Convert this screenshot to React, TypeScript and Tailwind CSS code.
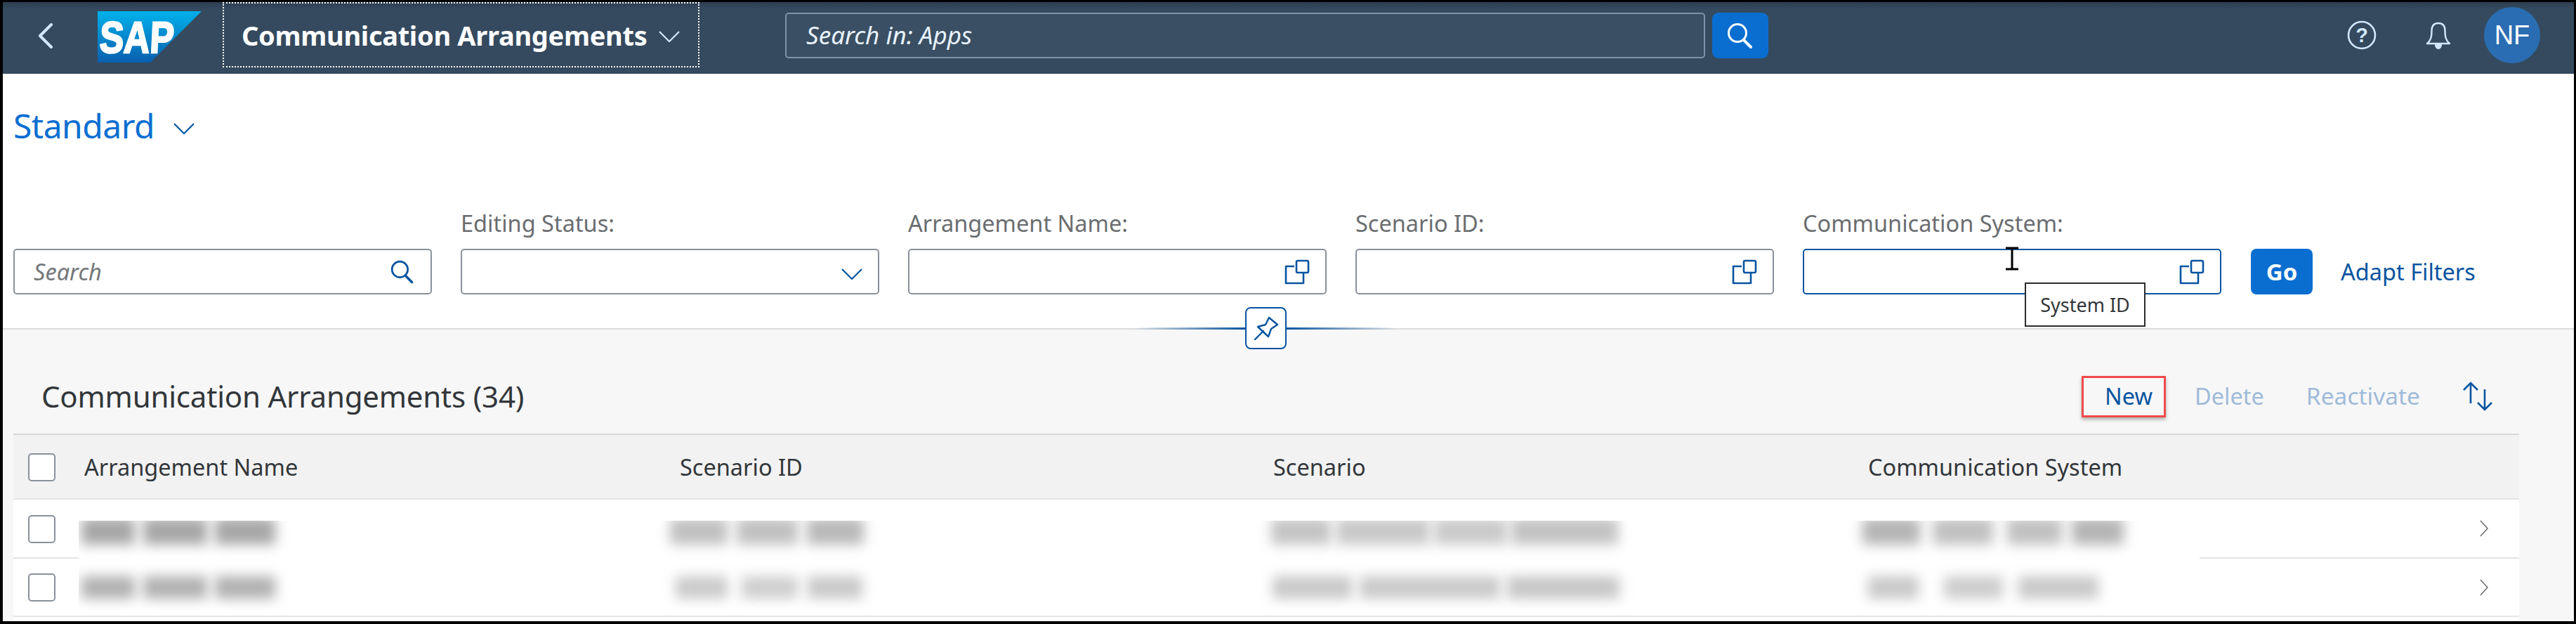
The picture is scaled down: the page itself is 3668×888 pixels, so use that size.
import React from "react";

const SearchIcon = ({ className }: { className: string }) => (
  <svg viewBox="0 0 40 40" className={className} fill="none" stroke="currentColor">
    <circle cx="16" cy="16" r="12.5" strokeWidth="3" />
    <path d="M25 26 L35 36" strokeWidth="4" strokeLinecap="round" />
  </svg>
);

const Chevron = ({ className }: { className: string }) => (
  <svg viewBox="0 0 30 16" className={className} fill="none" stroke="currentColor" strokeWidth="2.2">
    <path d="M1 1 L15 15 L29 1" />
  </svg>
);

const ValueHelp = () => (
  <svg viewBox="0 0 36 36" className="h-[36px] w-[36px] text-[#0854a0]" fill="none" stroke="currentColor" strokeWidth="2.6" strokeLinejoin="round">
    <path d="M14 10 H2 V34 H27 V20" />
    <rect x="17" y="2" width="17" height="17" rx="2" />
  </svg>
);

const Field = ({ label, focused, children }: { label: string; focused?: boolean; children: React.ReactNode }) => (
  <div className="flex w-[596px] flex-col">
    <div className="h-[49px] text-[32.5px] leading-[26px] text-[#6a6d70]">{label}</div>
    <div
      className={
        focused
          ? "relative flex h-[65px] items-center justify-between rounded-[5px] border-2 border-[#0854a0] bg-white pl-[26px] pr-[22px]"
          : "relative flex h-[65px] items-center justify-between rounded-[5px] border-2 border-[#89919a] bg-white pl-[26px] pr-[22px]"
      }
    >
      {children}
    </div>
  </div>
);

const Checkbox = () => <div className="h-[40px] w-[39px] rounded-[5px] border-2 border-[#89919a] bg-white" />;

const RowChevron = () => (
  <svg viewBox="0 0 12 24" className="h-[24px] w-[12px] text-[#6a6d70]" fill="none" stroke="currentColor" strokeWidth="1.6">
    <path d="M1 1 L11 12 L1 23" />
  </svg>
);

type Blob = [number, number, string];

const row1: Blob[] = [
  [116, 192, "#a6a6a6"], [204, 295, "#a6a6a6"], [306, 392, "#a6a6a6"],
  [954, 1036, "#c0c0c0"], [1049, 1136, "#c0c0c0"], [1149, 1230, "#b8b8b8"],
  [1810, 1895, "#c4c4c4"], [1903, 2036, "#c8c8c8"], [2042, 2146, "#cacaca"], [2152, 2304, "#c2c2c2"],
  [2652, 2734, "#b4b4b4"], [2752, 2838, "#c0c0c0"], [2858, 2936, "#c0c0c0"], [2950, 3024, "#b4b4b4"],
];
const row2: Blob[] = [
  [116, 192, "#b0b0b0"], [204, 295, "#b0b0b0"], [306, 392, "#b0b0b0"],
  [962, 1036, "#cacaca"], [1056, 1136, "#cecece"], [1150, 1228, "#c8c8c8"],
  [1812, 1925, "#c8c8c8"], [1936, 2136, "#c9c9c9"], [2146, 2306, "#c6c6c6"],
  [2660, 2732, "#c8c8c8"], [2768, 2852, "#cccccc"], [2874, 2988, "#c8c8c8"],
];

const BlurRow = ({ blobs, className, bar }: { blobs: Blob[]; className: string; bar: string }) => (
  <div className={className}>
    {blobs.map(([a, b, c], i) => (
      <div
        key={i}
        className={bar}
        style={{ width: b - a, marginLeft: a - (i === 0 ? 112 : blobs[i - 1][1]), backgroundColor: c }}
      />
    ))}
  </div>
);

export default function App() {
  return (
    <div className="flex h-[888px] w-[3668px] flex-col overflow-hidden border-t-[3px] border-r-[3px] border-b-[4px] border-l-[4px] border-black bg-white font-['Noto_Sans',sans-serif]">
      {/* Shell bar */}
      <header className="flex h-[102px] shrink-0 items-start bg-[linear-gradient(#2d3f51,#354a5f_10px)] text-[#d1e8ff]">
        <svg viewBox="0 0 22 36" className="ml-[50px] mt-[30px] h-[36px] w-[22px]" fill="none" stroke="currentColor" strokeWidth="4" strokeLinecap="round" strokeLinejoin="round">
          <path d="M19 2 L3 18 L19 34" />
        </svg>
        <svg viewBox="0 0 148 73" className="ml-[63px] mt-[13px] h-[73px] w-[148px]">
          <defs>
            <linearGradient id="sapg" x1="0" y1="0" x2="0" y2="1">
              <stop offset="0" stopColor="#00b1eb" />
              <stop offset="1" stopColor="#0a5fae" />
            </linearGradient>
          </defs>
          <polygon points="0,0 148,0 75,73 0,73" fill="url(#sapg)" />
          <text x="5" y="59" transform="skewX(-3)" fill="#fff" fontFamily="'Liberation Sans',sans-serif" fontWeight="700" fontSize="63" textLength="106" lengthAdjust="spacingAndGlyphs" stroke="#fff" strokeWidth="2.5">
            SAP
          </text>
        </svg>
        <div className="ml-[30px] flex h-[93px] w-[679px] items-center border-2 border-dotted border-white pl-[25px]">
          <span className="text-[38px] font-bold leading-none tracking-[-0.3px] text-white">Communication Arrangements</span>
          <Chevron className="ml-[16px] mt-[4px] h-[16px] w-[32px]" />
        </div>
        <div className="ml-[122px] mt-[15px] flex h-[65px] w-[1310px] items-center rounded-[5px] border-2 border-[#7d93ab] bg-[#3a4f63] pb-[2px] pl-[28px]">
          <span className="text-[35px] italic leading-none text-[#e8f2fc]">Search in: Apps</span>
        </div>
        <div className="ml-[10px] mt-[15px] flex h-[65px] w-[80px] items-center justify-center rounded-[9px] bg-[#0a6ed1] text-white">
          <SearchIcon className="h-[40px] w-[40px]" />
        </div>
        <svg viewBox="0 0 42 42" className="ml-[824px] mt-[26px] h-[42px] w-[42px]" fill="none">
          <circle cx="21" cy="21" r="19" stroke="currentColor" strokeWidth="2.6" />
          <text x="21" y="31" textAnchor="middle" fill="currentColor" fontFamily="'Liberation Sans',sans-serif" fontWeight="700" fontSize="29">
            ?
          </text>
        </svg>
        <svg viewBox="0 0 36 41" className="ml-[70px] mt-[27px] h-[41px] w-[36px]" fill="none" stroke="currentColor" strokeWidth="2.4" strokeLinejoin="round">
          <path d="M2 32 C8 27 8.5 21 8.5 14 C8.5 7 12 3 18 3 C24 3 27.5 7 27.5 14 C27.5 21 28 27 34 32 Z" />
          <path d="M13 33 H23 C23 37 21 40 18 40 C15 40 13 37 13 33 Z" fill="currentColor" stroke="none" />
        </svg>
        <div className="ml-[47px] mt-[7px] flex h-[80px] w-[80px] items-center justify-center rounded-full bg-[#2a6db2] font-['Liberation_Sans',sans-serif] text-[38px] leading-none text-white">
          NF
        </div>
      </header>

      {/* Filter bar */}
      <section className="relative flex h-[364px] shrink-0 flex-col border-b-[2px] border-[#dcdcdc] bg-white">
        <div className="ml-[15px] mt-[44px] flex h-[60px] items-center">
          <span className="text-[48px] leading-none tracking-[-0.5px] text-[#0a6ed1]">Standard</span>
          <Chevron className="ml-[27px] mt-[8px] h-[16px] w-[30px] text-[#0854a0]" />
        </div>
        <div className="ml-[15px] mt-[96px] flex items-end gap-[41px]">
          <div className="flex h-[65px] w-[596px] items-center justify-between rounded-[5px] border-2 border-[#89919a] bg-white pl-[27px] pr-[22px]">
            <span className="pt-[2px] text-[32.5px] italic leading-none text-[#74777a]">Search</span>
            <SearchIcon className="h-[36px] w-[36px] text-[#0854a0]" />
          </div>
          <Field label="Editing Status:">
            <span />
            <Chevron className="mt-[6px] h-[16px] w-[30px] text-[#0854a0]" />
          </Field>
          <Field label="Arrangement Name:">
            <span />
            <ValueHelp />
          </Field>
          <Field label="Scenario ID:">
            <span />
            <ValueHelp />
          </Field>
          <Field label="Communication System:" focused>
            <span />
            <ValueHelp />
            <svg viewBox="0 0 26 34" className="absolute left-[283px] top-[-5px] h-[34px] w-[26px]" fill="none" stroke="#000" strokeWidth="2.5">
              <path d="M13 2 V32 M4 2 H22 M4 32 H22" strokeWidth="3" />
            </svg>
            <div className="absolute left-[314px] top-[46px] z-10 flex h-[63px] w-[172px] items-center justify-center border-2 border-[#2b2b2b] bg-white text-[27px] leading-none text-[#32363a]">
              System ID
            </div>
          </Field>
          <div className="ml-[1px] flex h-[65px] w-[88px] items-center justify-center rounded-[8px] bg-[#0a6ed1] text-[33px] font-bold leading-none text-white">
            Go
          </div>
          <div className="ml-[-1px] flex h-[65px] items-center pt-[2px] text-[32.5px] leading-none text-[#0854a0]">Adapt Filters</div>
        </div>
        <div className="absolute left-[1610px] top-[361px] h-[3px] w-[159px] bg-[linear-gradient(to_right,transparent,#0854a0)]" />
        <div className="absolute left-[1828px] top-[361px] h-[3px] w-[157px] bg-[linear-gradient(to_left,transparent,#0854a0)]" />
        <div className="absolute left-[1769px] top-[332px] z-10 flex h-[60px] w-[59px] items-center justify-center rounded-[8px] border-2 border-[#0854a0] bg-white">
          <svg viewBox="0 0 59 60" className="h-[60px] w-[59px] shrink-0" fill="none" stroke="#0854a0" strokeWidth="2.4" strokeLinejoin="round" strokeLinecap="round">
            <path d="M18 28 L29 25 L34 15 L46 25 L37 31 L33 42 Z" />
            <path d="M14 46 L26 34" />
          </svg>
        </div>
      </section>

      {/* Table area */}
      <main className="flex min-h-0 flex-1 flex-col bg-[#f7f7f7]">
        <div className="flex h-[148px] shrink-0 items-center pt-[42px] pl-[55px]">
          <span className="text-[42px] leading-none tracking-[-0.2px] text-[#32363a]">Communication Arrangements (34)</span>
          <div className="ml-auto flex items-center">
            <div className="flex h-[59px] w-[120px] items-center justify-end border-[3px] border-[#f04a4a] pr-[16px] text-[32.5px] leading-none text-[#0854a0] shadow-[0_3px_5px_rgba(0,0,0,0.3)]">
              New
            </div>
            <span className="ml-[41px] text-[32.5px] leading-none text-[#9fbbd9]">Delete</span>
            <span className="ml-[60px] text-[33.5px] leading-none text-[#9fbbd9]">Reactivate</span>
            <svg viewBox="0 0 42 42" className="ml-[61px] mr-[116px] h-[42px] w-[42px] text-[#0854a0]" fill="none" stroke="currentColor" strokeWidth="2.6">
              <path d="M11 31 V2 M1 12 L11 2 L21 12" />
              <path d="M31 11 V40 M21 30 L31 40 L41 30" />
            </svg>
          </div>
        </div>

        <div className="ml-[15px] flex h-[267px] w-[3568px] flex-col bg-white">
          <div className="flex h-[94px] shrink-0 items-center border-t-2 border-b-2 border-t-[#d9d9d9] border-b-[#e5e5e5] bg-[#f2f2f2] pt-[2px] text-[32.5px] leading-none text-[#32363a]">
            <div className="w-[101px] shrink-0 pl-[21px]">
              <Checkbox />
            </div>
            <div className="w-[848px] shrink-0">Arrangement Name</div>
            <div className="w-[845px] shrink-0">Scenario ID</div>
            <div className="w-[847px] shrink-0">Scenario</div>
            <div>Communication System</div>
          </div>
          <div className="flex h-[167px] shrink-0 border-b-2 border-[#e5e5e5]">
            <div className="flex w-[93px] shrink-0 flex-col">
              <div className="flex h-[84px] items-center border-b-2 border-[#e5e5e5] pt-[2px] pl-[21px]">
                <Checkbox />
              </div>
              <div className="flex flex-1 items-center pl-[21px]">
                <Checkbox />
              </div>
            </div>
            <div className="flex w-[3020px] shrink-0 flex-col pt-[30px]">
              <BlurRow blobs={row1} className="flex h-[60px] items-start overflow-hidden" bar="mt-[-4px] h-[38px] shrink-0 blur-[9px]" />
              <BlurRow blobs={row2} className="flex h-[67px] items-start overflow-hidden" bar="mt-[19px] h-[32px] shrink-0 blur-[9px]" />
            </div>
            <div className="flex flex-1 flex-col">
              <div className="flex h-[84px] items-center justify-end border-b-2 border-[#e5e5e5] pr-[44px]">
                <RowChevron />
              </div>
              <div className="flex flex-1 items-center justify-end pr-[44px]">
                <RowChevron />
              </div>
            </div>
          </div>
        </div>
      </main>
    </div>
  );
}
